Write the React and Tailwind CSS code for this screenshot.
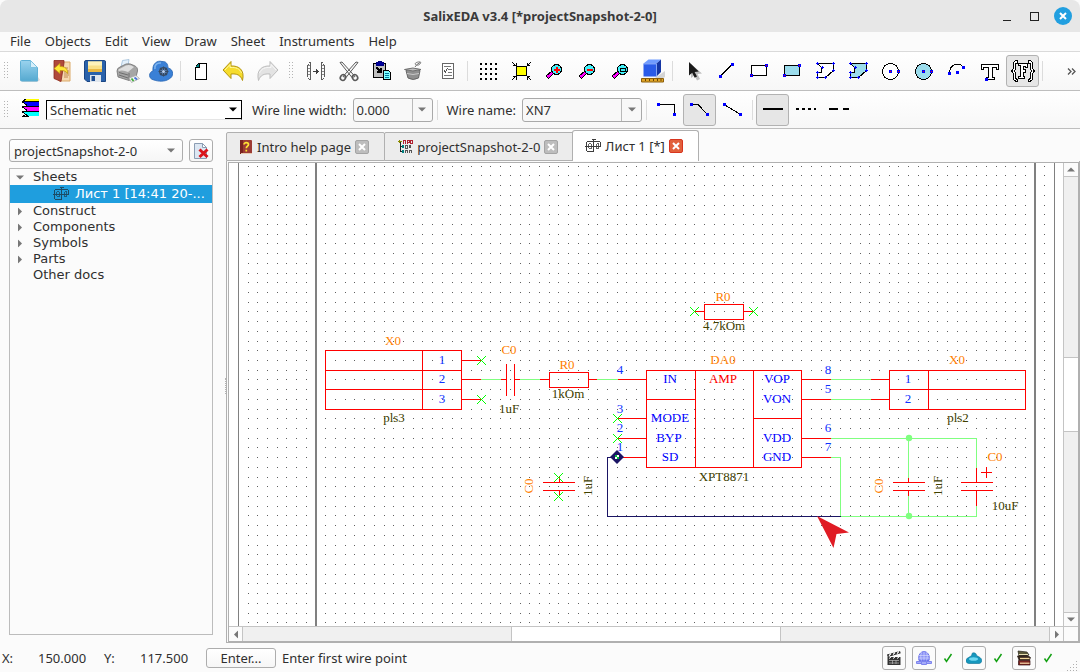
import React from "react";

const range = (n) => Array.from({ length: n }, (_, i) => i);

/* ---------- generic icon frame ---------- */
function Icon({ children, crisp = false, className = "size-6" }) {
  return (
    <svg
      viewBox="0 0 24 24"
      className={`${className} shrink-0`}
      fill="none"
      stroke="none"
      shapeRendering={crisp ? "crispEdges" : "auto"}
      aria-hidden="true"
    >
      {children}
    </svg>
  );
}

function Nodes({ at, fill = "#0000ff" }) {
  return at.map(([x, y], i) => (
    <g key={i}>
      <rect x={x - 1} y={y - 1} width="3" height="3" fill="#0000ff" />
      {fill !== "#0000ff" && <rect x={x} y={y} width="1" height="1" fill={fill} />}
    </g>
  ));
}

/* ---------- file icons ---------- */
const NewIcon = () => (
  <Icon>
    <defs>
      <linearGradient id="newDoc" x1="0" y1="0" x2="0" y2="1">
        <stop offset="0" stopColor="#9ad3ee" />
        <stop offset="1" stopColor="#55a9d0" />
      </linearGradient>
    </defs>
    <path d="M6 20l15-2 2 3-3 2H5z" fill="#c9c9c9" opacity=".7" />
    <path d="M3.500 2.500Q3.500 1.500 4.500 1.500H13.500L20.500 8.500V22H4.500Q3.500 22 3.500 21z" fill="url(#newDoc)" stroke="#5fb0d6" />
    <path d="M13.500 1.500L20.500 8.500H13.500z" fill="#d7effa" stroke="#7cc1e0" />
  </Icon>
);

const ExitIcon = () => (
  <Icon>
    <path d="M9 3h11v19H9z" fill="#f6d9b0" stroke="#dba968" />
    <path d="M14 12h5M14 14h5M14 16h5M14 18h4M15 9h3" stroke="#c08a55" />
    <path d="M4 1.500h10V4L11 22.500 4 19.500z" fill="#b04a3c" stroke="#8c2a20" strokeWidth=".8" />
    <path d="M4 9.500L10 4.500v3c5 0 8 2 7.500 7C15.500 11.500 13 11.500 10 11.500V14.500z" fill="#ffe83a" stroke="#c79a10" strokeWidth=".8" />
  </Icon>
);

const SaveIcon = () => (
  <Icon>
    <path d="M1.500 3Q1.500 1.500 3 1.500H21.500Q22.500 1.500 22.500 3V22.500H4L1.500 20z" fill="#2a62ab" stroke="#1b4684" />
    <path d="M5 2.500h14v10.500H5z" fill="#f8e08a" />
    <path d="M5 2.500h14v4H5z" fill="#fdf2bb" />
    <path d="M5 10h14v3H5z" fill="#e9b843" />
    <path d="M7 16h11v7H7z" fill="#dfe6ee" />
    <path d="M8.500 17h3.500v5H8.500z" fill="#1f4e91" />
  </Icon>
);

const PrintIcon = () => (
  <Icon>
    <path d="M5 8L6.500 1.500 13 .5 12 7z" fill="#e3f0fb" stroke="#9ebcd8" strokeWidth=".8" />
    <path d="M1 12Q1 9 4 8L10 5Q14 4 18 6.500Q22 8 21.500 12L20 18l-7 3.500L2 18z" fill="#a6a6a6" stroke="#707070" strokeWidth=".8" />
    <path d="M2.500 10.500L10 6.500Q14 5 18 8L12 13Q7 10.500 2.500 12z" fill="#dedede" />
    <path d="M3 13.500l9 2.500M3 16l9 3M13 14v6.500" stroke="#6e6e6e" />
    <path d="M13 19l7-2.500 3.500 3-8 4z" fill="#f5f5f5" stroke="#aaa" strokeWidth=".8" />
    <path d="M15.500 19.500l2 2.500" stroke="#3cae36" strokeWidth="1.800" />
    <path d="M18.500 18.500l2.500 2" stroke="#4573d8" strokeWidth="1.800" />
  </Icon>
);

const CloudIcon = () => (
  <Icon>
    <path d="M5 21C-1 20-.5 13 4 12C3 5 8 1 13 2.500C17 2 19 5 19 9C25 10 25 18 20 20C16 23 9 22.500 5 21z" fill="#3a80d6" stroke="#2463b3" strokeWidth=".8" />
    <path d="M6 10C5 6 8 3.500 12 4" stroke="#7db3ee" strokeWidth="1.600" />
    <circle cx="14.500" cy="12.500" r="3.800" stroke="#364a63" strokeWidth="1.500" fill="#6f9fdc" />
    <path d="M14.500 7.500v10M9.500 12.500h10M11 9l7 7M18 9l-7 7" stroke="#364a63" strokeWidth="1.100" />
    <circle cx="14.500" cy="12.500" r="1.500" fill="#b7cff0" />
  </Icon>
);

const PageIcon = () => (
  <Icon crisp>
    <path d="M10 4h8v16H6V8z" fill="#fff" />
    <path d="M6 8h4V4z" fill="#008080" />
    <path d="M10 4.500h7.500v15.500h-11V8M6.500 8h3.500V4.500M7 7l3-3" stroke="#000" />
  </Icon>
);

const UndoIcon = () => (
  <Icon>
    <path d="M1 11L9 2.500V7C17 6.500 23 11 20.500 21.500C18.500 16 15 14.500 9 15V19.500z" fill="#f6dc2c" stroke="#b39410" />
    <path d="M3 11L8 5.500V8.500C14 8 18 10 19.500 14" stroke="#fff7a0" />
  </Icon>
);

const RedoIcon = () => (
  <Icon>
    <path d="M23 11L15 2.500V7C7 6.500 1 11 3.500 21.500C5.500 16 9 14.500 15 15V19.500z" fill="#e3e3e3" stroke="#bdbdbd" />
    <path d="M21 11L16 5.500V8.500C10 8 6 10 4.500 14" stroke="#f8f8f8" />
  </Icon>
);

/* ---------- edit icons ---------- */
const PinsIcon = () => (
  <Icon crisp>
    <path d="M6.500 3v18M17.500 3v18M6 3.500h-1M4 5.500v-1M3.500 6v12M4 18.500v1M6 20.500h-1M18 3.500h1M19.500 4.500v1M20.500 6v12M19.500 18.500v1M18 20.500h1" stroke="#5c5c5c" />
    <path d="M4 6.500h2M4 9.500h2M4 12.500h2M4 15.500h2M18 6.500h2M18 9.500h2M18 12.500h2M18 15.500h2" stroke="#8a8a8a" />
    <path d="M9 12h6M12.500 9.500v5M13.500 10.500v3" stroke="#3f3f3f" />
  </Icon>
);

const CutIcon = () => (
  <Icon>
    <path d="M3 3.500L5 3l13 14.500-3 1zM21 3.500L19 3 6 17.500l3 1z" fill="#f8f8f8" stroke="#5a5a5a" />
    <ellipse cx="6" cy="18.500" rx="2.500" ry="3" stroke="#5a5a5a" strokeWidth="1.600" transform="rotate(35 6 18.500)" />
    <ellipse cx="18" cy="18.500" rx="2.500" ry="3" stroke="#5a5a5a" strokeWidth="1.600" transform="rotate(-35 18 18.500)" />
  </Icon>
);

const PasteIcon = () => (
  <Icon crisp>
    <path d="M3.500 4.500h12v14h-12z" fill="#c0c0c0" stroke="#000" />
    <path d="M6 3h2V2h3v1h2v3H6z" fill="#0000a0" stroke="#000080" />
    <path d="M6.500 8.500l4 4M11 9v5M7 13h4M9 12h2" stroke="#000" strokeWidth="1.500" />
    <path d="M13.500 11.500h5l2 2v7h-7z" fill="#80ffff" stroke="#000" />
    <path d="M15 14.500h4M15 16.500h4M15 18.500h4" stroke="#0080a0" />
  </Icon>
);

const BucketIcon = () => (
  <Icon>
    <path d="M3 11.500Q10 9.500 17 11.500L15.500 19Q10 22 5 19z" fill="#8f8f8f" stroke="#666" />
    <path d="M1.500 10.500Q10 7.500 18 10.500Q10 13.500 1.500 10.500z" fill="#bfbfbf" stroke="#6f6f6f" />
    <path d="M4 14.500q6 2 12 0" stroke="#c9c9c9" />
    <path d="M12 8l2-2.500M12.500 5.500C11 4 15 2.500 17.500 3C18.500 4.500 15 7.500 12.500 5.500zM14 5.500l3-2" stroke="#777" />
  </Icon>
);

const ChecklistIcon = () => (
  <Icon crisp>
    <path d="M6.500 4.500h11v15h-11z" fill="#fff" stroke="#666" />
    <path d="M8 7.500h7M12 10.500h4M12 13.500h4M8 16.500h8" stroke="#777" />
    <path d="M8 11l1.500 2 2-4" stroke="#555" />
  </Icon>
);

/* ---------- view icons ---------- */
const GridIcon = () => (
  <Icon crisp>
    {range(4).map((r) =>
      range(4).map((c) => (
        <rect key={`${r}-${c}`} x={4 + c * 5} y={4 + r * 5} width="2" height="2" fill="#000" />
      ))
    )}
  </Icon>
);

const FitIcon = () => (
  <Icon crisp>
    <rect x="7.500" y="7.500" width="10" height="9" fill="#ffff00" stroke="#000" />
    <path d="M3 3l4 4M22 3l-4 4M3 21l4-4M22 21l-4-4" stroke="#000" />
    <path d="M4 6.500h3v-3M21 6.500h-3v-3M4 17.500h3v3M21 17.500h-3v3" stroke="#000" />
  </Icon>
);

function ZoomIcon({ kind }) {
  return (
    <Icon crisp>
      <path d="M5 18.500L11 13" stroke="#000" strokeWidth="4" />
      <path d="M5.500 18L10.500 13.500" stroke="#ff00ff" strokeWidth="2.200" />
      <circle cx="14.500" cy="10.500" r="5" fill="#40f0f8" stroke="#000" />
      {kind !== "fit" && <path d="M12 10.500h6" stroke="#ff0000" strokeWidth="2" />}
      {kind === "in" && <path d="M15 7.500v6" stroke="#ff0000" strokeWidth="2" />}
      {kind === "fit" && <rect x="12.500" y="9.500" width="5" height="3" stroke="#000" />}
    </Icon>
  );
}

const CubeIcon = () => (
  <Icon>
    <path d="M14 19l10-7v6l-4 2z" fill="#bbb" opacity=".6" />
    <path d="M2.500 4.500L7.500 .5H20L15.500 4.500z" fill="#6f9bff" />
    <path d="M2.500 4.500h13V17.500h-13z" fill="#2a5be8" />
    <path d="M15.500 4.500L20 .5V13L15.500 17.500z" fill="#1536a4" />
    <path d="M3 5h12M15.500 5v12" stroke="#8fb2ff" strokeWidth=".8" />
    <path d="M.5 19.500h22v3.500H.5z" fill="#e0a526" stroke="#8a5e0c" />
    <path d="M4.500 20v2M8.500 20v2M12.500 20v2M16.500 20v2M20 20v2" stroke="#6a4506" />
  </Icon>
);

/* ---------- drawing tool icons ---------- */
const CursorIcon = () => (
  <Icon>
    <path d="M10 5v14l3.500-2.500 2.500 5 3-1.500-2.500-5 4.500-.5z" fill="#bdbdbd" />
    <path d="M8 3v13.500l3.200-2.700 2.500 5 2.300-1.200-2.400-4.700 4.200-.4z" fill="#1a1a1a" />
  </Icon>
);

const LineIcon = () => (
  <Icon crisp>
    <path d="M6 17.500L18 5.500" stroke="#000" />
    <Nodes at={[[6, 17], [18, 5]]} />
  </Icon>
);

function RectIcon({ fill }) {
  return (
    <Icon crisp>
      <rect x="4.500" y="6.500" width="15" height="10" fill={fill} stroke="#000" />
      <Nodes at={[[4, 16], [19, 6]]} fill="#ff0000" />
    </Icon>
  );
}

function PolyIcon({ fill }) {
  return (
    <Icon crisp>
      <path d="M4.500 4.500h16v7l-8 7h-8v-5h4v-5z" fill={fill} stroke="#000" />
      {[[4, 4], [20, 4], [20, 11], [12, 18], [4, 18], [4, 13], [9, 8]].map(([x, y]) => (
        <path key={`${x}-${y}`} d={`M${x - 1} ${y + 0.5}h3M${x + 0.5} ${y - 1}v3`} stroke="#0000ff" />
      ))}
    </Icon>
  );
}

function CircleIcon({ fill }) {
  return (
    <Icon crisp>
      <circle cx="11.500" cy="12.500" r="8" fill={fill} stroke="#000" />
      <Nodes at={[[11, 12], [19, 12]]} fill="#ff0000" />
    </Icon>
  );
}

const ArcIcon = () => (
  <Icon crisp>
    <path d="M4.500 14.500C4.500 5 14 2.500 18.500 8.500" stroke="#000" />
    <Nodes at={[[4, 14], [12, 13], [18, 8]]} />
  </Icon>
);

const TextToolIcon = () => (
  <Icon crisp>
    <path d="M3.500 5.500h17v5h-2v-2h-4v9.500h2v2.500h-8v-2.500h2V8.500H5.500v2h-2z" fill="#fff" stroke="#000" />
    <Nodes at={[[8, 20]]} />
  </Icon>
);

const FormatIcon = () => (
  <Icon crisp>
    <path d="M6.500 1.500h-2l-2 2v6l-2 2.500 2 2.500v6l2 1.500h2v-2h-1l-1-1v-5l-1-2 1-2v-5l1-1h1z" fill="#fff" stroke="#000" />
    <path d="M17.500 1.500h2l2 2v6l2 2.500-2 2.500v6l-2 1.500h-2v-2h1l1-1v-5l1-2-1-2v-5l-1-1h-1z" fill="#fff" stroke="#000" />
    <path d="M7.500 4.500h9v4h-2v-1h-2v3h2v3h-2v4h1v2h-6v-2h2v-11h-2z" fill="#fff" stroke="#000" />
  </Icon>
);

/* ---------- wire icons ---------- */
const LayersIcon = () => (
  <Icon crisp>
    <path d="M7 1h13v2H5z" fill="#ffff00" />
    {["#0000ff", "#ff00ff", "#00ffff"].map((c, i) => (
      <g key={c}>
        <path d={`M4 ${4 + i * 5}h16v4H8z`} fill={c} />
        <path d={`M3 ${3.5 + i * 5}h17M3 ${3.5 + i * 5}l5 4`} stroke="#000" />
      </g>
    ))}
    <path d="M4 3l3-2M3 18.500h6l-2-2z" stroke="#000" />
  </Icon>
);

function WireIcon({ d, at }) {
  return (
    <Icon crisp>
      <path d={d} stroke="#000" />
      <Nodes at={at} />
    </Icon>
  );
}

const StrokeIcon = ({ dash }) => (
  <Icon crisp>
    <path d="M2 11h20" stroke="#000" strokeWidth="2" strokeDasharray={dash} />
  </Icon>
);

/* ---------- document icons ---------- */
const SheetIcon = ({ color = "#3c3c3c", className = "size-4" }) => (
  <svg viewBox="0 0 16 16" className={`${className} shrink-0`} fill="none" stroke={color} shapeRendering="crispEdges" aria-hidden="true">
    <path d="M0 8.500h16M1.500 4v9M2 3.500h6M2 13.500h6M8.500 2v12M6.500 1.500h4M9 3.500h6M15.500 4v5" />
    <path d="M3.500 6v4M4 5.500h2M6.500 6v5M4 10.500h2M11.500 6v5M12 5.500h2M13.500 6v5M12 10.500h2" opacity=".8" />
  </svg>
);

const HelpIcon = () => (
  <svg viewBox="0 0 14 16" className="h-4 w-3.5 shrink-0" aria-hidden="true">
    <rect x="1" y="1" width="12" height="14" rx="1" fill="#9c3b34" />
    <rect x="1" y="1" width="3" height="14" fill="#7a231f" />
    <path d="M2 14h11v1H2z" fill="#e6c9b0" />
    <path d="M5 5.500C5 3 9.500 3 9.500 5.500C9.500 7.300 7.300 7 7.300 9.300M7.300 10.800v1.700" fill="none" stroke="#ffe433" strokeWidth="1.700" />
  </svg>
);

const ProjectIcon = () => (
  <svg viewBox="0 0 16 16" className="size-4 shrink-0" fill="none" shapeRendering="crispEdges" aria-hidden="true">
    <path d="M3.500 3v10M3 7.500h3M3 12.500h3" stroke="#222" />
    <path d="M1 2.500h4M2.500 1v3" stroke="#8a8a00" />
    <rect x="5" y="6" width="2" height="3" fill="#008080" />
    <rect x="5" y="11" width="2" height="3" fill="#008080" />
    <path d="M6.500 5V1.500h2V5M10.500 5V1.500h2v2h-2M13.500 4.500v-3h1.500v3z" stroke="#b02030" />
    <path d="M10.500 9V6.500h-2V9h2M12 6.500l2 2.500M14 6.500L12 9M8.500 14v-2.500h2V14M12.500 14v-2.500h2V14" stroke="#555" />
  </svg>
);

const RemoveDocIcon = () => (
  <svg viewBox="0 0 18 18" className="size-[18px]" fill="none" aria-hidden="true">
    <path d="M2.500 1.500h8l4 4v11h-12z" fill="#dce7f3" stroke="#8b9db3" />
    <path d="M10.500 1.500v4h4z" fill="#fff" stroke="#8b9db3" />
    <path d="M7.500 7.500l8 7.500M15.500 7.500l-8 7.500" stroke="#d9141b" strokeWidth="3" />
  </svg>
);

/* ---------- status icons ---------- */
const ClapperIcon = () => (
  <svg viewBox="0 0 16 16" className="size-4" fill="none" aria-hidden="true">
    <path d="M1.500 7h13v8h-13z" fill="#333" />
    <path d="M1 4.500L14 1l.7 2.300L1.700 7z" fill="#222" />
    <path d="M3 5.800l2-2.300M7 4.700L9 2.500M11 3.600l2-2.200" stroke="#fff" strokeWidth="1.200" />
    <path d="M3 8.500l2-1.500M7 8.500L9 7M11 8.500L13 7" stroke="#fff" />
    <path d="M3 10.500h10M3 13h10M6.500 10v4M10 10v4" stroke="#aaa" strokeWidth=".8" />
  </svg>
);

const GlobeIcon = () => (
  <svg viewBox="0 0 16 16" className="size-4" fill="none" aria-hidden="true">
    <path d="M3 10.500C1.500 5 5 1.500 8 1.500S14.500 5 13 10.500z" fill="#8b92f6" stroke="#6d74ea" />
    <path d="M3 5.500h10M2.500 8h11M8 1.500v9M5.500 2.500c-1 3-1 5 0 8M10.500 2.500c1 3 1 5 0 8" stroke="#dfe2ff" strokeWidth=".6" />
    <path d="M.5 11.500h5v2h-5zM10.500 11.500h5v2h-5zM5.500 11.500h5v3h-5z" fill="#a6acf8" stroke="#7d84ee" />
  </svg>
);

const SkyIcon = () => (
  <svg viewBox="0 0 16 16" className="size-4" fill="none" aria-hidden="true">
    <path d="M3 13.500C-1 13-1 9 2.500 7.500C5 6 6 6 6 3.500C7.500 2 10.500 3 10.500 5.500C12 6.500 13 6.500 14 7.500C17 10 16 13 13 13.500z" fill="#1697bd" stroke="#0b6f93" strokeWidth=".6" />
    <ellipse cx="7.500" cy="9" rx="4.500" ry="1.800" fill="#6fd8f1" />
  </svg>
);

const BooksIcon = () => (
  <svg viewBox="0 0 16 16" className="size-4" fill="none" aria-hidden="true">
    <path d="M2 1l9 1 2 3-10 1z" fill="#5c5a3a" stroke="#26241a" strokeWidth=".7" />
    <path d="M1.500 6l10-.500 3 2-1 2.500H3z" fill="#3b2a20" stroke="#1c120c" strokeWidth=".7" />
    <path d="M4 8.500h9.500" stroke="#f1d79a" strokeWidth="1.300" />
    <path d="M3 4.500h9" stroke="#e7deb0" />
    <path d="M2.500 10.500h11.500v4.500H2.500z" fill="#7b2520" stroke="#331010" strokeWidth=".7" />
    <path d="M4 12.500h9.500v1.500H4z" fill="#e2b78f" />
  </svg>
);

/* ---------- toolbar pieces ---------- */
function ToolButton({ label, active, disabled, children }) {
  return (
    <button
      type="button"
      aria-label={label}
      aria-pressed={active}
      disabled={disabled}
      className={`flex h-8 w-[33px] shrink-0 items-center justify-center rounded-[3px] border ${
        active ? "border-[#b2b2b2] bg-[#e6e6e6]" : "border-transparent"
      }`}
    >
      {children}
    </button>
  );
}

const Separator = () => (
  <div className="flex w-[7px] shrink-0 justify-center">
    <div className="h-5 w-px bg-[#dcdcdc]" />
  </div>
);

function Handle({ className = "w-3" }) {
  return (
    <svg viewBox="0 0 4 18" className={`${className} h-[18px] shrink-0`} shapeRendering="crispEdges" aria-hidden="true">
      {range(6).map((i) => (
        <g key={i} fill="#b4b4b4">
          <rect x="0" y={i * 3} width="1" height="1" />
          <rect x="3" y={i * 3} width="1" height="1" />
        </g>
      ))}
    </svg>
  );
}

const Caret = ({ className = "" }) => (
  <svg viewBox="0 0 8 5" className={`h-[5px] w-2 shrink-0 ${className}`} aria-hidden="true">
    <path d="M0 .5h8l-4 4z" fill="currentColor" />
  </svg>
);

function EditCombo({ id, label, value, width, labelGap }) {
  return (
    <>
      <label htmlFor={id} className={`shrink-0 ${labelGap}`}>{label}</label>
      <div className={`flex h-6 shrink-0 overflow-hidden rounded-[3px] border border-[#a9a9a9] bg-[#f8f8f8] ${width}`}>
        <input id={id} defaultValue={value} className="min-w-0 flex-1 bg-transparent px-[3px] outline-none" />
        <button type="button" aria-label={`${label} options`} className="flex w-5 items-center justify-center border-l border-[#b9b9b9] text-[#777]">
          <Caret />
        </button>
      </div>
    </>
  );
}

function MenuBar() {
  return (
    <nav className="flex h-5 shrink-0 items-start gap-3.5 border-b border-[#dadada] bg-[#fbfbfb] pl-2.5">
      {["File", "Objects", "Edit", "View", "Draw", "Sheet", "Instruments", "Help"].map((m) => (
        <button key={m} type="button" className="leading-[18px]">{m}</button>
      ))}
    </nav>
  );
}

function TitleBar() {
  return (
    <header className="grid h-8 shrink-0 grid-cols-[1fr_auto_1fr] items-center rounded-t-lg bg-[#e7e7e7]">
      <span />
      <h1 className="text-[13px] font-bold text-[#3a3a3a]">SalixEDA v3.4 [*projectSnapshot-2-0]</h1>
      <div className="flex items-center justify-end gap-[19px] pr-2">
        <button type="button" aria-label="Minimize" className="flex h-[9px] w-2 items-end">
          <span className="h-px w-2 bg-[#222]" />
        </button>
        <button type="button" aria-label="Maximize" className="size-[9px] border border-[#222]" />
        <button type="button" aria-label="Close" className="-ml-1 flex size-[18px] items-center justify-center rounded-full bg-[#219fe0]">
          <svg viewBox="0 0 8 8" className="size-2" aria-hidden="true">
            <path d="M1 1l6 6M7 1L1 7" stroke="#fff" strokeWidth="2" />
          </svg>
        </button>
      </div>
    </header>
  );
}

function MainToolbar() {
  return (
    <div role="toolbar" aria-label="Main" className="flex h-[39px] shrink-0 items-center overflow-hidden border-b border-[#bebebe] bg-gradient-to-b from-white to-[#f7f7f7] pr-1">
      <Handle />
      <ToolButton label="New"><NewIcon /></ToolButton>
      <ToolButton label="Open"><ExitIcon /></ToolButton>
      <ToolButton label="Save"><SaveIcon /></ToolButton>
      <ToolButton label="Print"><PrintIcon /></ToolButton>
      <ToolButton label="Cloud"><CloudIcon /></ToolButton>
      <Separator />
      <ToolButton label="Page"><PageIcon /></ToolButton>
      <ToolButton label="Undo"><UndoIcon /></ToolButton>
      <ToolButton label="Redo" disabled><RedoIcon /></ToolButton>
      <Handle className="w-4" />
      <ToolButton label="Pins" disabled><PinsIcon /></ToolButton>
      <ToolButton label="Cut" disabled><CutIcon /></ToolButton>
      <ToolButton label="Paste"><PasteIcon /></ToolButton>
      <ToolButton label="Delete" disabled><BucketIcon /></ToolButton>
      <ToolButton label="Properties" disabled><ChecklistIcon /></ToolButton>
      <Separator />
      <ToolButton label="Grid"><GridIcon /></ToolButton>
      <ToolButton label="Fit"><FitIcon /></ToolButton>
      <ToolButton label="Zoom in"><ZoomIcon kind="in" /></ToolButton>
      <ToolButton label="Zoom out"><ZoomIcon kind="out" /></ToolButton>
      <ToolButton label="Zoom window"><ZoomIcon kind="fit" /></ToolButton>
      <ToolButton label="3D view"><CubeIcon /></ToolButton>
      <Separator />
      <ToolButton label="Select"><CursorIcon /></ToolButton>
      <ToolButton label="Line"><LineIcon /></ToolButton>
      <ToolButton label="Rectangle"><RectIcon fill="#fff" /></ToolButton>
      <ToolButton label="Filled rectangle"><RectIcon fill="#9bdcec" /></ToolButton>
      <ToolButton label="Polygon"><PolyIcon fill="#fff" /></ToolButton>
      <ToolButton label="Filled polygon"><PolyIcon fill="#9bdcec" /></ToolButton>
      <ToolButton label="Circle"><CircleIcon fill="#fff" /></ToolButton>
      <ToolButton label="Filled circle"><CircleIcon fill="#9bdcec" /></ToolButton>
      <ToolButton label="Arc"><ArcIcon /></ToolButton>
      <ToolButton label="Text"><TextToolIcon /></ToolButton>
      <ToolButton label="Format" active><FormatIcon /></ToolButton>
      <Separator />
      <button type="button" aria-label="More tools" className="ml-auto">
        <svg viewBox="0 0 9 7" className="h-[7px] w-[9px]" fill="none" stroke="#555" strokeWidth="1.300" aria-hidden="true">
          <path d="M1 .5l3 3-3 3M5 .5l3 3-3 3" />
        </svg>
      </button>
    </div>
  );
}

function WireToolbar() {
  return (
    <div role="toolbar" aria-label="Wire" className="flex h-[38px] shrink-0 items-center overflow-hidden border-b border-[#bebebe] bg-gradient-to-b from-white to-[#f7f7f7]">
      <Handle />
      <div className="flex w-[34px] shrink-0 justify-center pl-1"><LayersIcon /></div>
      <div className="grid h-5 w-[196px] shrink-0 items-center border border-t-black border-r-black border-b-[#e5e5e5] border-l-black bg-white">
        <select aria-label="Layer" className="col-start-1 row-start-1 w-full appearance-none bg-transparent pl-[3px] leading-4 outline-none">
          <option>Schematic net</option>
        </select>
        <span className="pointer-events-none col-start-1 row-start-1 flex h-[18px] w-4 items-center justify-center justify-self-end border-b border-black text-black">
          <Caret />
        </span>
      </div>
      <EditCombo id="wire-width" label="Wire line width:" value="0.000" width="w-20" labelGap="ml-2.5 mr-1.5" />
      <div className="w-px shrink-0" />
      <Separator />
      <EditCombo id="wire-name" label="Wire name:" value="XN7" width="w-[120px]" labelGap="mx-1.5" />
      <div className="w-px shrink-0" />
      <Separator />
      <ToolButton label="Orthogonal"><WireIcon d="M3 6.500h16.500v10.500" at={[[3, 6], [19, 16]]} /></ToolButton>
      <ToolButton label="Diagonal" active><WireIcon d="M3 6.500h7l9 9.500" at={[[3, 6], [19, 16]]} /></ToolButton>
      <ToolButton label="Free"><WireIcon d="M3 6.500L19 16" at={[[3, 6], [19, 16]]} /></ToolButton>
      <Separator />
      <ToolButton label="Solid" active><StrokeIcon /></ToolButton>
      <ToolButton label="Dotted"><StrokeIcon dash="3 3" /></ToolButton>
      <ToolButton label="Dashed"><StrokeIcon dash="9 5 6 9" /></ToolButton>
    </div>
  );
}

/* ---------- project tree ---------- */
function Sidebar() {
  return (
    <aside className="flex w-[213px] shrink-0 flex-col gap-1.5 pt-2.5 pb-2 pl-[9px]">
      <div className="flex shrink-0 gap-1.5">
        <div className="grid h-[23px] flex-1 items-center rounded-[3px] border border-[#adadad] bg-gradient-to-b from-white to-[#f6f6f6]">
          <select aria-label="Project" className="col-start-1 row-start-1 w-full appearance-none bg-transparent pl-1 outline-none">
            <option>projectSnapshot-2-0</option>
          </select>
          <Caret className="pointer-events-none col-start-1 row-start-1 mr-[7px] justify-self-end text-[#777]" />
        </div>
        <button type="button" aria-label="Close project" className="flex h-[23px] w-6 items-center justify-center rounded-[3px] border border-[#adadad] bg-gradient-to-b from-white to-[#f6f6f6]">
          <RemoveDocIcon />
        </button>
      </div>
      <ul role="tree" className="min-h-0 flex-1 border border-[#bcbcbc] font-['DejaVu_Sans',sans-serif] text-[13px] leading-4">
        <TreeRow label="Sheets" open />
        <li role="treeitem" aria-selected="true" className="flex h-[18px] items-center gap-1.5 bg-[#1f9ede] pr-1.5 pl-[43px] text-white">
          <SheetIcon color="#1d4a63" />
          <span className="truncate">Лист 1 [14:41 20-...</span>
        </li>
        {["Construct", "Components", "Symbols", "Parts"].map((t) => (
          <TreeRow key={t} label={t} />
        ))}
        <TreeRow label="Other docs" leaf />
      </ul>
    </aside>
  );
}

function TreeRow({ label, open, leaf }) {
  return (
    <li role="treeitem" aria-expanded={leaf ? undefined : Boolean(open)} className="flex h-4 items-center">
      <span className="flex w-[23px] shrink-0 items-center pl-1.5 text-[#777]">
        {!leaf && <Caret className={open ? "" : "-rotate-90"} />}
      </span>
      {label}
    </li>
  );
}

/* ---------- tabs ---------- */
function Tab({ icon, label, active }) {
  return (
    <div
      role="tab"
      aria-selected={Boolean(active)}
      className={`flex shrink-0 items-center gap-1 border border-[#b0b0b0] pr-[15px] pl-3 ${
        active ? "-ml-px h-[31px] rounded-t-[3px] border-b-0 bg-white" : "-mr-px h-[29px] rounded-t-[2px] bg-[#ececec]"
      }`}
    >
      {icon}
      <span>{label}</span>
      <button
        type="button"
        aria-label={`Close ${label}`}
        className={`flex size-3.5 items-center justify-center rounded-[2px] border ${
          active ? "border-[#d8351f] bg-[#e2603c]" : "border-[#a4a4a4] bg-[#bdbdbd]"
        }`}
      >
        <svg viewBox="0 0 8 8" className="size-2" aria-hidden="true">
          <path d="M1 1l6 6M7 1L1 7" stroke="#fff" strokeWidth="2" />
        </svg>
      </button>
    </div>
  );
}

/* ---------- schematic ---------- */
const PITCH = 9.715;
const gridPath = range(83)
  .filter((c) => c !== 7 && c !== 81)
  .map((c) => range(48).map((r) => `M${Math.floor(248 + c * PITCH)} ${Math.floor(166.2 + r * PITCH) + 0.5}h1`).join(""))
  .join("");

const RED =
  "M325.500 350.500h136v59h-136zM325 370.500h137M325 389.500h137M422.500 350v60" +
  "M461 360.500h20M461 379.500h20M461 399.500h20" +
  "M501 379.500h5M506.500 364v32M514.500 364v32M514 379.500h6" +
  "M540 379.500h9M549.500 372.500h39v15h-39zM588 379.500h9" +
  "M618 379.500h28M617 418.500h29M617 438.500h29M620 457.500h26" +
  "M646.500 370.500h155v97h-155zM695.500 370v97M753.500 370v97M646 399.500h49M753 418.500h48" +
  "M801 379.500h30M801 399.500h30M801 438.500h30M801 457.500h30" +
  "M871 379.500h18M871 399.500h18M889.500 370.500h136v39h-136zM889 389.500h136M928.500 370v39" +
  "M704.500 304.500h39v15h-39zM695 311.500h9M743 311.500h10" +
  "M543 482.500h32M543 490.500h32M559.500 477v5M559.500 490v6" +
  "M893 482.500h32M893 490.500h32M908.500 478v4M908.500 490v6" +
  "M961 482.500h32M961 490.500h32M976.500 468v14M976.500 490v16M981 472.500h11M986.500 467v11";

const WIRES =
  "M481 379.500h20M520 379.500h20M597 379.500h21M831 379.500h40M831 399.500h40" +
  "M831 438.500h145.500v30M908.500 438v40M908.500 496v20M976.500 506v10.500h-136v-59h-10";

const CROSSES = [[481, 360], [481, 399], [617, 418], [617, 438], [694, 311], [753, 311], [558, 477], [558, 496]];

const ORANGE = "#ff8000";
const OLIVE = "#404000";
const BLUE = "#0000ff";
const NUM = "#0f32ff";

const LABELS = [
  ["X0", 393, 345, ORANGE], ["C0", 509, 354, ORANGE], ["R0", 567, 369, ORANGE], ["R0", 723, 301, ORANGE],
  ["DA0", 723, 364, ORANGE], ["X0", 957, 364, ORANGE], ["C0", 995, 461, ORANGE],
  ["pls3", 394, 422, OLIVE], ["1uF", 509, 413, OLIVE], ["1kOm", 568, 398, OLIVE], ["4.7kOm", 724, 330, OLIVE],
  ["XPT8871", 724, 481, OLIVE], ["pls2", 958, 422, OLIVE], ["10uF", 1005, 510, OLIVE],
  ["AMP", 723, 383, "#ff0000"],
  ["IN", 670, 383, BLUE], ["MODE", 670, 422, BLUE], ["BYP", 669, 442, BLUE], ["SD", 670, 461, BLUE],
  ["VOP", 777, 383, BLUE], ["VON", 777, 403, BLUE], ["VDD", 777, 442, BLUE], ["GND", 777, 461, BLUE],
  ["1", 442, 364, NUM], ["2", 442, 383, NUM], ["3", 442, 403, NUM],
  ["4", 620, 374, NUM], ["3", 620, 413, NUM], ["2", 620, 432, NUM], ["1", 620, 451, NUM],
  ["8", 828, 374, NUM], ["5", 828, 393, NUM], ["6", 828, 432, NUM], ["7", 828, 451, NUM],
  ["1", 908, 383, NUM], ["2", 908, 403, NUM],
];

const VERTICAL_LABELS = [
  ["C0", 533, 486, ORANGE], ["1uF", 592, 486, OLIVE], ["C0", 883, 486, ORANGE], ["1uF", 942, 486, OLIVE],
];

function Schematic() {
  return (
    <svg className="size-full font-['Liberation_Serif',serif] text-[13px]" fill="none" role="img" aria-label="Schematic sheet">
      <g transform="translate(-229 -163)">
        <g shapeRendering="crispEdges">
          <path d="M238.500 0v2000M1054.500 0v2000" stroke="#808080" />
          <path d="M316 0v2000M1035 0v2000" stroke="#808080" strokeWidth="2" />
          <path d={gridPath} stroke="#606060" />
          <path d={WIRES} stroke="#80ff80" />
          <path d={RED} stroke="#ff0000" />
          <path d="M617 457.500h-9.500v59h233" stroke="#1a1464" />
        </g>
        <circle cx="909" cy="438" r="3.200" fill="#80ff80" />
        <circle cx="909" cy="516" r="3.200" fill="#80ff80" />
        <path
          d={CROSSES.map(([x, y]) => `M${x - 4} ${y - 4}l9 9M${x + 5} ${y - 4}l-9 9`).join("")}
          stroke="#00ff00"
          shapeRendering="crispEdges"
        />
        {LABELS.map(([t, x, y, c], i) => (
          <text key={i} x={x} y={y} fill={c} textAnchor="middle">{t}</text>
        ))}
        {VERTICAL_LABELS.map(([t, x, y, c], i) => (
          <text key={i} transform={`translate(${x} ${y}) rotate(-90)`} fill={c} textAnchor="middle">{t}</text>
        ))}
        <path d="M617 450l7 7-7 7-7-7z" fill="#1a1464" />
        <rect x="615" y="455" width="4" height="4" fill="#fff" />
        <path d="M615 455h2v2h-2zM617 457h2v2h-2z" fill="#00c040" />
        <path d="M817 516l32 16.500-12.500 1.500L833.500 548z" fill="#e01b24" />
      </g>
    </svg>
  );
}

/* ---------- scroll bars ---------- */
function ArrowButton({ label, turn, className }) {
  return (
    <button type="button" aria-label={label} className={`flex size-3.5 shrink-0 items-center justify-center border-[#c4c4c4] bg-[#fbfbfb] text-[#777] ${className}`}>
      <Caret className={turn} />
    </button>
  );
}

function Workspace() {
  return (
    <main className="flex min-w-0 flex-1 flex-col">
      <div role="tablist" className="flex h-8 shrink-0 items-end">
        <Tab icon={<HelpIcon />} label="Intro help page" />
        <Tab icon={<ProjectIcon />} label="projectSnapshot-2-0" />
        <Tab icon={<SheetIcon />} label="Лист 1 [*]" active />
      </div>
      <div className="flex min-h-0 flex-1 border border-t-0 border-[#b0b0b0] pt-px pl-px">
        <div className="grid min-h-0 min-w-0 flex-1 grid-cols-[1fr_15px] grid-rows-[1fr_15px] border border-[#b0b0b0]">
          <div className="min-h-0 min-w-0 overflow-hidden bg-white">
            <Schematic />
          </div>
          <div className="flex flex-col border-l border-[#c4c4c4] bg-[#f0f0f0]">
            <ArrowButton label="Scroll up" turn="rotate-180" className="border-b" />
            <div className="flex-5" />
            <div className="flex-2 border-y border-[#c4c4c4] bg-white" />
            <div className="flex-5" />
            <ArrowButton label="Scroll down" turn="" className="border-t" />
          </div>
          <div className="flex border-t border-[#c4c4c4] bg-[#f0f0f0]">
            <ArrowButton label="Scroll left" turn="rotate-90" className="border-r" />
            <div className="flex-1" />
            <div className="flex-1 border-x border-[#c4c4c4] bg-white" />
            <div className="flex-1" />
            <ArrowButton label="Scroll right" turn="-rotate-90" className="border-l" />
          </div>
          <div className="border-t border-l border-[#c4c4c4] bg-[#fbfbfb]" />
        </div>
      </div>
    </main>
  );
}

/* ---------- status bar ---------- */
const Check = () => (
  <svg viewBox="0 0 10 10" className="mx-[7px] h-2.5 w-2.5 shrink-0" fill="none" stroke="#14a014" strokeWidth="1.500" aria-hidden="true">
    <path d="M1.500 5.500L3.500 8.500L8.500 1" />
  </svg>
);

function StatusButton({ label, children }) {
  return (
    <button type="button" aria-label={label} className="flex size-6 shrink-0 items-center justify-center rounded-[3px] border border-[#adadad] bg-[#fbfbfb]">
      {children}
    </button>
  );
}

function StatusBar() {
  return (
    <footer className="flex h-[29px] shrink-0 items-center pl-0.5">
      <span className="w-9 shrink-0">X:</span>
      <output className="w-[66px] shrink-0">150.000</output>
      <span className="w-9 shrink-0">Y:</span>
      <output className="w-[66px] shrink-0">117.500</output>
      <button type="button" className="mr-1.5 h-5 w-[70px] shrink-0 rounded-[3px] border border-[#adadad] bg-gradient-to-b from-white to-[#f6f6f6] leading-4">
        Enter...
      </button>
      <span>Enter first wire point</span>
      <div className="ml-auto flex items-center">
        <StatusButton label="Recorder"><ClapperIcon /></StatusButton>
        <div className="w-1.5" />
        <StatusButton label="Server"><GlobeIcon /></StatusButton>
        <Check />
        <div className="w-0.5" />
        <StatusButton label="Cloud"><SkyIcon /></StatusButton>
        <Check />
        <div className="w-0.5" />
        <StatusButton label="Library"><BooksIcon /></StatusButton>
        <Check />
      </div>
      <svg viewBox="0 0 12 12" className="mr-0.5 ml-1.5 size-3 shrink-0 self-end" shapeRendering="crispEdges" fill="#b0b0b0" aria-hidden="true">
        {range(4).map((r) =>
          range(r + 1).map((c) => <rect key={`${r}-${c}`} x={10 - c * 3} y={1 + r * 3} width="1" height="1" />)
        )}
      </svg>
    </footer>
  );
}

export default function App() {
  return (
    <div className="flex h-screen flex-col overflow-hidden bg-[#fbfbfb] font-['Noto_Sans','Open_Sans',sans-serif] text-[13px] leading-5 text-[#2f2f2f]">
      <TitleBar />
      <MenuBar />
      <MainToolbar />
      <WireToolbar />
      <div className="flex min-h-0 flex-1">
        <Sidebar />
        <div className="flex w-[13px] shrink-0 items-center justify-end">
          <div className="h-4 border-l border-dotted border-[#b4b4b4]" />
        </div>
        <Workspace />
      </div>
      <StatusBar />
    </div>
  );
}
